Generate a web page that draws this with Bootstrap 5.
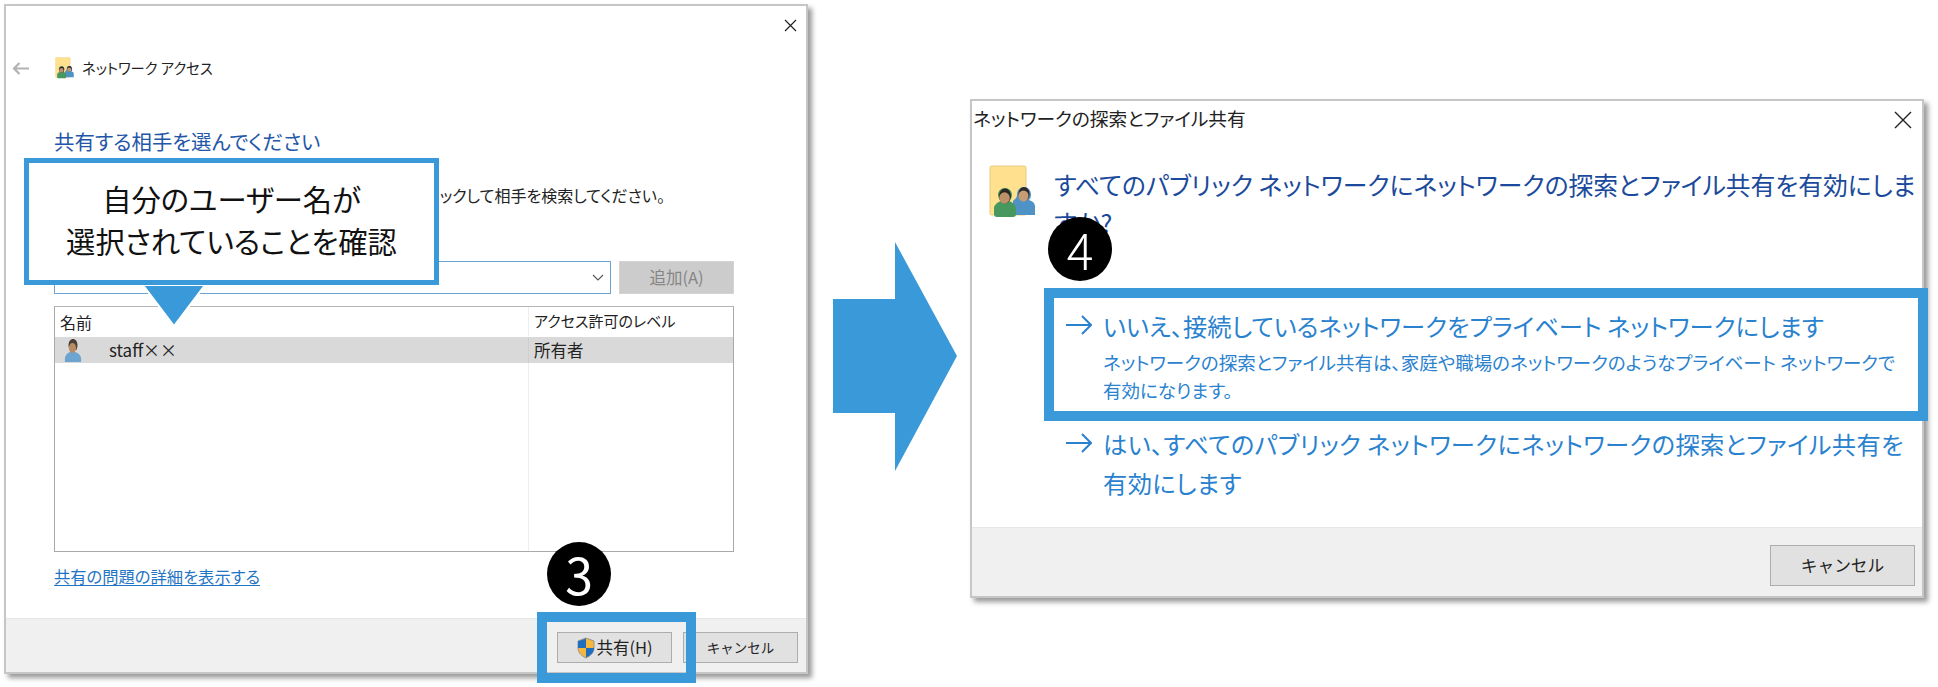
<!DOCTYPE html>
<html lang="ja">
<head>
  <meta charset="UTF-8" />
  <title>ネットワーク アクセス</title>
  <link href="https://cdn.jsdelivr.net/npm/bootstrap@5.3.0/dist/css/bootstrap.min.css" rel="stylesheet">
  <style>
    html, body { height: 100%; }
    body {
      background: #fff;
      position: relative;
      width: 1938px;
      height: 687px;
      overflow: hidden;
      color: #222;
      font-family: "Noto Sans CJK JP", "Liberation Sans", sans-serif;
      font-feature-settings: "palt";
      font-size: 15px;
    }
    .win {
      position: absolute;
      background: #fff;
      border: 2px solid #c6c6c6;
      box-shadow: 4px 4px 5px #9a9a9a;
    }
    .win-share { left: 4px; top: 4px; width: 804px; height: 670px; }
    .win-net { left: 970px; top: 99px; width: 954px; height: 499px; }

    /* left dialog */
    .share-top { height: 38px; padding-right: 9px; }
    .share-nav { height: 48px; padding-left: 6px; font-size: 14.3px; }
    .share-back { margin-right: 25px; }
    .share-nav-icon { margin-right: 8px; }
    .share-body { padding-left: 48px; width: 728px; }
    .share-h { color: #2456a8; font-size: 20.4px; font-weight: 400; line-height: 30px; margin: 34px 0 0; white-space: nowrap; }
    .share-desc { line-height: 20px; margin-top: 29px; white-space: nowrap; font-size: 16px; width: 611px; }
    .share-combo-row { margin-top: 56px; gap: 8px; }
    .share-combo { width: 557px; height: 33px; border: 1px solid #6aa5d6; padding-right: 6px; }
    .share-add { width: 115px; height: 33px; background: #ccc; border: 1px solid #d4d4d4; border-radius: 0; color: #858585; font-size: 16.5px; padding: 0; }
    .share-table { margin-top: 12px; height: 246px; border: 1px solid #a9a9a9; border-top-color: #b5b5b5; font-size: 15px; }
    .share-tr { padding-left: 1px; padding-right: 1px; }
    .share-head { height: 29px; }
    .share-sel { height: 26px; background: #d9d9d9; margin-top: 1px; }
    .share-fill { flex: 1; }
    .share-c1 { width: 472px; flex: none; padding-left: 4px; }
    .share-head .share-c1 { font-size: 16px; }
    .share-c2 { border-left: 1px solid #eee; padding-left: 5px; height: 100%; }
    .share-sel .share-c2 { border-left-color: #cfcfcf; font-size: 16.5px; }
    .share-name { margin-left: 27px; font-size: 17px; }
    .share-link { display: block; margin-top: 14px; color: #1f74c4; font-size: 16.3px; line-height: 20px; text-underline-offset: 2px; }

    .win-foot { margin-top: auto; background: #f0f0f0; border-top: 1px solid #e6e6e6; }
    .share-foot { height: 54px; padding: 13px 8px 0 0; gap: 11px; }
    .win-btn { background: #e1e1e1; border: 1px solid #adadad; border-radius: 0; color: #222; padding: 0; }
    .share-foot .win-btn { width: 115px; height: 31px; font-size: 13.5px; }
    .share-foot .win-btn-main { font-size: 16.5px; }

    /* right dialog */
    .net-top { height: 34px; padding: 0 10px 0 1px; font-size: 18.7px; }
    .net-top svg { margin-top: 4px; }
    .net-main { padding: 30px 0 0 17px; }
    .net-icon { flex: none; margin-right: 19px; }
    .net-h { color: #1b4a9c; font-size: 24.8px; line-height: 38px; font-weight: 400; margin: 0; white-space: nowrap; }
    .net-opts { margin-top: 65px; padding-left: 94px; color: #2a82cf; }
    .net-arrow { width: 37px; flex: none; padding-top: 6px; }
    .net-t { font-size: 24.3px; line-height: 39px; white-space: nowrap; }
    .net-t-long { letter-spacing: .33px; }
    .net-s { font-size: 18.5px; line-height: 28px; margin-top: 3px; white-space: nowrap; }
    .net-gap { margin-top: 20px; }
    .net-foot { height: 69px; padding: 17px 7px 0 0; }
    .net-foot .win-btn { width: 145px; height: 41px; font-size: 16.7px; }

    /* annotations on top of the screenshots */
    .hl-box { position: absolute; border: 10px solid #3a9ad9; }
    .hl-share { left: 537px; top: 612px; width: 159px; height: 71px; }
    .hl-net { left: 1044px; top: 288px; width: 884px; height: 133px; }
    .step-dot {
      position: absolute;
      width: 64px; height: 64px;
      border-radius: 50%;
      background: #000;
      color: #fff;
      font-size: 50px;
      line-height: 62px;
      text-align: center;
    }
    .step-3 { left: 547px; top: 542px; }
    .step-4 { left: 1048px; top: 217px; font-weight: 300; }
    .note {
      position: absolute;
      left: 24px; top: 158px;
      width: 415px; height: 127px;
      background: #fff;
      border: 5px solid #3a9ad9;
      color: #111;
      font-size: 29.3px;
      line-height: 42px;
      text-align: center;
      padding-top: 14px;
    }
    .note-tip { position: absolute; left: 137px; top: 283px; }
    .big-arrow { position: absolute; left: 833px; top: 242px; }
  </style>
</head>
<body>

<svg width="0" height="0" class="position-absolute">
  <defs>
    <symbol id="users" viewBox="0 0 46 54">
      <rect x="1" y="1" width="36" height="49" rx="1.5" fill="#fee08e" stroke="#e8cd80"/>
      <path d="M28 30c0-5 3-8 7-8s7 3 7 8c0 2-1 4-2 5 3 1 6 3 6 6v9H24V36c1-1 4-3 4-6z" fill="#4f93c6"/>
      <ellipse cx="35" cy="29" rx="5.6" ry="7" fill="#2f2a26"/>
      <ellipse cx="34.500" cy="31" rx="5" ry="5.500" fill="#c69c74"/>
      <path d="M8 52c-2 0-3-1-3-3v-6c0-3 4-6 7-7-2-2-3-4-3-6 0-4 3-7 7-7s7 3 7 7c0 2-1 4-3 6 3 1 7 4 7 7v6c0 2-1 3-3 3z" fill="#47985e"/>
      <ellipse cx="16" cy="31" rx="6" ry="7.500" fill="#2b2723"/>
      <ellipse cx="15.500" cy="33" rx="5.300" ry="5.800" fill="#bd9169"/>
    </symbol>
  </defs>
</svg>

<div class="win win-share d-flex flex-column">
  <div class="share-top d-flex justify-content-end align-items-center">
    <svg width="13" height="13" viewBox="0 0 13 13"><path d="M1 1l11 11M12 1L1 12" stroke="#222" stroke-width="1.2" fill="none"/></svg>
  </div>
  <div class="share-nav d-flex align-items-center">
    <svg class="share-back" width="18" height="13" viewBox="0 0 18 13"><path d="M17 6.500H2M7.500 1L2 6.500 7.500 12" stroke="#b3b3b3" stroke-width="2.200" fill="none"/></svg>
    <svg class="share-nav-icon" width="19" height="22" viewBox="0 0 46 54"><use href="#users"/></svg>
    <span>ネットワーク アクセス</span>
  </div>
  <div class="share-body">
    <h1 class="share-h">共有する相手を選んでください</h1>
    <div class="share-desc d-flex justify-content-end">名前を入力して [追加] をクリックするか、または矢印をクリックして相手を検索してください。</div>
    <div class="share-combo-row d-flex">
      <div class="share-combo d-flex align-items-center justify-content-end">
        <svg width="12" height="7" viewBox="0 0 12 7"><path d="M1 1l5 5 5-5" stroke="#555" stroke-width="1.1" fill="none"/></svg>
      </div>
      <button type="button" class="btn share-add">追加(A)</button>
    </div>
    <div class="share-table d-flex flex-column">
      <div class="share-tr share-head d-flex align-items-center">
        <div class="share-c1">名前</div>
        <div class="share-c2 d-flex align-items-center">アクセス許可のレベル</div>
      </div>
      <div class="share-tr share-sel d-flex align-items-center">
        <div class="share-c1 d-flex align-items-center">
          <svg class="ms-1" width="18" height="23" viewBox="0 0 18 23">
            <path d="M1 23c-1-6 2-9 5-10h5c4 1 7 4 6 10z" fill="#6da5d0"/>
            <path d="M4.500 7c0-5 2-7 4.500-7s4.500 2 4.500 7l-1 4h-7z" fill="#4a4038"/>
            <ellipse cx="8.500" cy="9" rx="3.600" ry="5" fill="#b88d66"/>
          </svg>
          <span class="share-name">staff××</span>
        </div>
        <div class="share-c2 d-flex align-items-center">所有者</div>
      </div>
      <div class="share-tr share-fill d-flex">
        <div class="share-c1"></div>
        <div class="share-c2"></div>
      </div>
    </div>
    <a class="share-link" href="#">共有の問題の詳細を表示する</a>
  </div>
  <div class="win-foot share-foot d-flex justify-content-end">
    <button type="button" class="btn win-btn win-btn-main d-flex align-items-center justify-content-center">
      <svg width="20" height="22" viewBox="0 0 20 22">
        <path d="M10 1l8 3v7c0 5-4 8-8 10-4-2-8-5-8-10V4z" fill="#f6b73c" stroke="#7d8a99" stroke-width=".8"/>
        <path d="M10 1.500V11H2V4.300zM10 11h8c0 5-4 7.500-8 9.500z" fill="#1f6fc0"/>
      </svg>
      共有(H)
    </button>
    <button type="button" class="btn win-btn">キャンセル</button>
  </div>
</div>

<svg class="big-arrow" width="125" height="230" viewBox="0 0 125 230">
  <polygon points="0,57 62,57 62,0 124,114 62,229 62,171 0,171" fill="#3a9ad9"/>
</svg>

<div class="win win-net d-flex flex-column">
  <div class="net-top d-flex justify-content-between align-items-center">
    <span>ネットワークの探索とファイル共有</span>
    <svg width="18" height="18" viewBox="0 0 18 18"><path d="M1 1l16 16M17 1L1 17" stroke="#222" stroke-width="1.400" fill="none"/></svg>
  </div>
  <div class="net-main d-flex">
    <svg class="net-icon" width="46" height="54" viewBox="0 0 46 54"><use href="#users"/></svg>
    <h2 class="net-h">すべてのパブリック ネットワークにネットワークの探索とファイル共有を有効にしま<br>すか?</h2>
  </div>
  <div class="net-opts">
    <div class="d-flex">
      <div class="net-arrow">
        <svg width="26" height="20" viewBox="0 0 26 20"><path d="M0 10h24M16 1l9 9-9 9" stroke="#2a82cf" stroke-width="2" fill="none"/></svg>
      </div>
      <div>
        <div class="net-t">いいえ、接続しているネットワークをプライベート ネットワークにします</div>
        <div class="net-s">ネットワークの探索とファイル共有は、家庭や職場のネットワークのようなプライベート ネットワークで<br>有効になります。</div>
      </div>
    </div>
    <div class="net-gap d-flex">
      <div class="net-arrow">
        <svg width="26" height="20" viewBox="0 0 26 20"><path d="M0 10h24M16 1l9 9-9 9" stroke="#2a82cf" stroke-width="2" fill="none"/></svg>
      </div>
      <div class="net-t net-t-long">はい、すべてのパブリック ネットワークにネットワークの探索とファイル共有を<br>有効にします</div>
    </div>
  </div>
  <div class="win-foot net-foot d-flex justify-content-end">
    <button type="button" class="btn win-btn">キャンセル</button>
  </div>
</div>

<div class="note">自分のユーザー名が<br>選択されていることを確認</div>
<svg class="note-tip" width="74" height="44" viewBox="0 0 74 44">
  <polygon points="6,2 68,2 37,43" fill="#3a9ad9" stroke="#fff" stroke-width="2"/>
  <rect x="0" y="0" width="74" height="2" fill="#3a9ad9"/>
</svg>

<div class="hl-box hl-share"></div>
<div class="hl-box hl-net"></div>
<div class="step-dot step-3">3</div>
<div class="step-dot step-4">4</div>

<script src="https://cdn.jsdelivr.net/npm/bootstrap@5.3.0/dist/js/bootstrap.bundle.min.js"></script>
</body>
</html>
